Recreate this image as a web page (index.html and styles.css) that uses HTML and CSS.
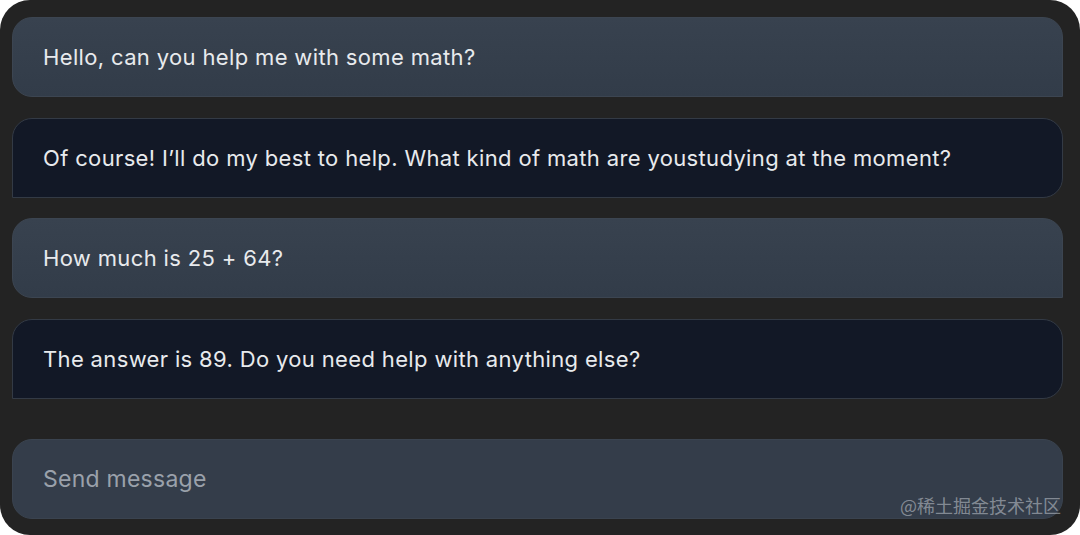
FILE: index.html
```html
<!DOCTYPE html>
<html lang="en">
<head>
<meta charset="utf-8">
<title>Chat</title>
<link rel="stylesheet" href="styles.css">
</head>
<body>
<div class="chat">
  <div class="messages">
    <div class="msg user">Hello, can you help me with some math?</div>
    <div class="msg bot">Of course! I’ll do my best to help. What kind of math are youstudying at the moment?</div>
    <div class="msg user">How much is 25 + 64?</div>
    <div class="msg bot">The answer is 89. Do you need help with anything else?</div>
  </div>
  <div class="input">Send message</div>
  <div class="watermark">@稀土掘金技术社区</div>
</div>
</body>
</html>
```
FILE: styles.css
```css
html, body {
  margin: 0;
  padding: 0;
  background: #ffffff;
}
body {
  width: 1080px;
  height: 535px;
  overflow: hidden;
  font-family: Inter, "Liberation Sans", Arial, sans-serif;
}
.chat {
  position: relative;
  box-sizing: border-box;
  width: 1080px;
  height: 535px;
  background: #232323;
  border-radius: 30px;
  padding: 17px 17px 16px 12px;
  display: flex;
  flex-direction: column;
}
.messages {
  display: flex;
  flex-direction: column;
  gap: 20.5px;
}
.msg {
  box-sizing: border-box;
  height: 80px;
  display: flex;
  align-items: center;
  padding: 0 30px;
  font-size: 22px;
  letter-spacing: 0.35px;
  color: #e8eaed;
  border-radius: 20px;
}
.user {
  background: linear-gradient(180deg, #38424f 0%, #323c49 100%);
  border: 1px solid #3c4551;
  border-bottom-right-radius: 0;
}
.bot {
  background: #121826;
  border: 1px solid #333a45;
  border-bottom-left-radius: 0;
}
.input {
  box-sizing: border-box;
  margin-top: 40.5px;
  height: 80px;
  display: flex;
  align-items: center;
  padding: 0 30px;
  font-size: 23px;
  letter-spacing: 0.25px;
  color: #9aa1ab;
  background: #343d4a;
  border: 1px solid #3a434f;
  border-radius: 20px;
}
.watermark {
  position: absolute;
  right: 19px;
  bottom: 17px;
  font-family: "Noto Sans CJK SC", sans-serif;
  font-size: 18px;
  color: rgba(200, 205, 212, 0.55);
}
```
